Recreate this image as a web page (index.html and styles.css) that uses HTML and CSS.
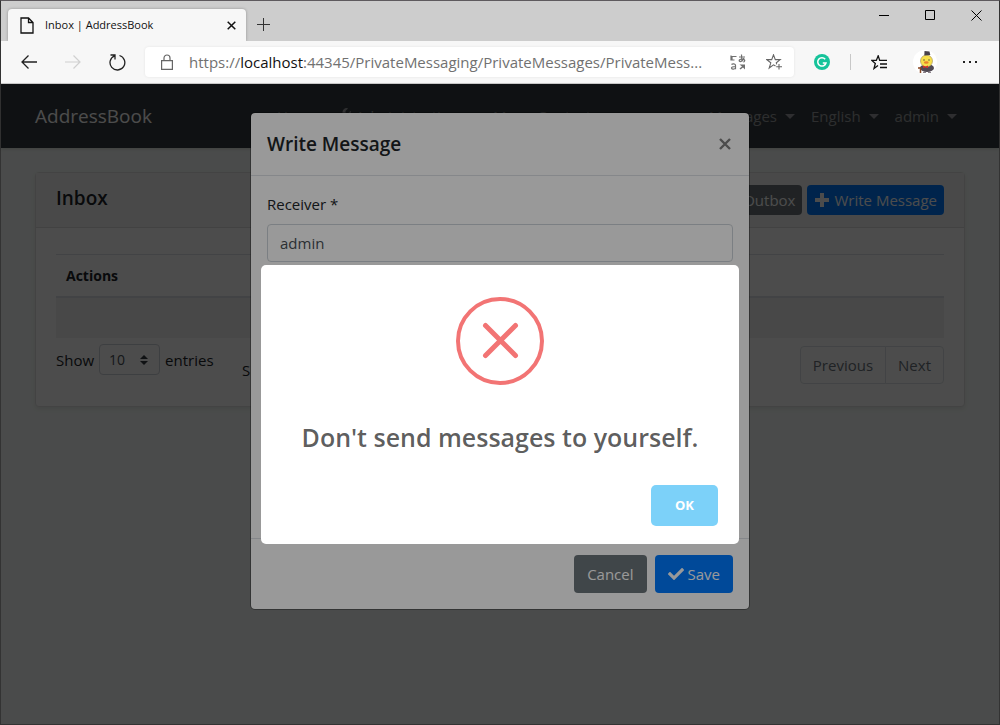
FILE: index.html
```html
<!DOCTYPE html>
<html lang="en">
<head>
<meta charset="utf-8">
<title>Inbox | AddressBook</title>
<link rel="stylesheet" href="styles.css">
</head>
<body>
<div class="window">
  <header class="chrome">
    <div class="tab-strip">
      <div class="tab">
        <svg class="tab-page" width="14" height="17" viewBox="0 0 14 17" fill="none" stroke="#111" stroke-width="1.3"><path d="M1 1h7.500l4.500 4.500V16H1z M8.500 1v4.500H13"/></svg>
        <span class="tab-title">Inbox | AddressBook</span>
        <button class="plain" aria-label="Close tab"><svg width="9" height="9" viewBox="0 0 9 9" stroke="#111" stroke-width="1.500"><path d="M.7.7l7.600 7.600M8.300.7L.7 8.300"/></svg></button>
      </div>
      <button class="plain new-tab" aria-label="New tab"><svg width="13" height="13" viewBox="0 0 13 13" stroke="#333"><path d="M6.500 0v13M0 6.500h13"/></svg></button>
      <div class="window-buttons">
        <button class="plain" aria-label="Minimize"><svg width="10" height="10" viewBox="0 0 10 10" stroke="#000"><path d="M0 5.500h10"/></svg></button>
        <button class="plain" aria-label="Maximize"><svg width="10" height="10" viewBox="0 0 10 10" fill="none" stroke="#000"><path d="M.5.5h9v9h-9z"/></svg></button>
        <button class="plain" aria-label="Close"><svg width="11" height="11" viewBox="0 0 11 11" stroke="#000"><path d="M.5.500l10 10M10.500.500l-10 10"/></svg></button>
      </div>
    </div>
    <div class="toolbar">
      <button class="plain tool" aria-label="Back"><svg width="16" height="14" viewBox="0 0 16 14" fill="none" stroke="#222" stroke-width="1.300"><path d="M16 7H1M7.500.500L1 7l6.500 6.500"/></svg></button>
      <button class="plain tool" aria-label="Forward" disabled><svg width="16" height="14" viewBox="0 0 16 14" fill="none" stroke="#d0d0d0" stroke-width="1.200"><path d="M0 7h15M8.500.500L15 7l-6.500 6.500"/></svg></button>
      <button class="plain tool" aria-label="Refresh"><svg width="17" height="17" viewBox="0 0 17 17" fill="none" stroke="#222" stroke-width="1.300"><path d="M10.500 1.500a7.400 7.400 0 1 1-5 .3M1.500 1h4.500v4.500"/></svg></button>
      <div class="address">
        <svg width="12" height="16" viewBox="0 0 12 16" fill="none" stroke="#666" stroke-width="1.200"><path d="M.6 6.600h10.800v8.800H.6zM3 6.500V4a3 3 0 0 1 6 0v2.500"/></svg>
        <span class="url">https://<b>localhost</b>:44345/PrivateMessaging/PrivateMessages/PrivateMess...</span>
        <button class="plain" aria-label="Translate"><svg width="16" height="16" viewBox="0 0 16 16" fill="none" stroke="#707070" stroke-width="1.200"><path d="M6.500 2.500H2v3.500M1 1.500v4.500h3.500M9 3h6M11.500.500c0 3 0 5 .8 7M14 4c-1 3-3.500 4-4.500 3.300S10 4.800 12.500 5s3 2 1 3.200M1.500 10.500c1-1 4-1 4 .8v4M5.500 12.500c-3 0-4 .5-4 1.500s2.500 2 4 0"/><path d="M9.500 10.500h5.500v5l-2-2-2.500 2-1-1 2.500-2z" fill="#707070" stroke="none"/></svg></button>
        <button class="plain" aria-label="Add to favorites"><svg width="17" height="16" viewBox="0 0 17 16" fill="none" stroke="#666" stroke-width="1.100"><path d="M9.500 12l-2-1.200-4.300 3.200 1.600-5.200L.8 5.600h4.900L7.500.8l1.800 4.800h4.900l-3.900 3.200.4 1.500M13 10v5.500M10.200 12.800h5.800"/></svg></button>
      </div>
      <div class="extensions">
        <button class="plain" aria-label="Grammar check"><svg width="16" height="16" viewBox="0 0 16 16"><circle cx="8" cy="8" r="8" fill="#15c39a"/><path d="M11.200 5.200A4.200 4.200 0 1 0 12 9H8.800" fill="none" stroke="#fff" stroke-width="1.500"/></svg></button>
        <span class="divider"></span>
        <button class="plain" aria-label="Favorites"><svg width="16" height="15" viewBox="0 0 16 15" fill="none" stroke="#111" stroke-width="1.300"><path d="M7 10.500l-4 3 1.300-5L.8 5.400h4.500L7.200.8l1.500 4.600H16M9 9h7M9 12.500h7"/></svg></button>
        <button class="plain profile" aria-label="Profile"><svg width="24" height="24" viewBox="0 0 24 24"><circle cx="12" cy="12" r="12" fill="#fff"/><ellipse cx="14" cy="18" rx="7" ry="4" fill="#514a54"/><path d="M10 22.500h3M15 22.500h3" stroke="#8a8088"/><ellipse cx="13.500" cy="11" rx="6" ry="6" fill="#f7df4b" stroke="#a08a50" stroke-width=".6"/><path d="M11.500 1l5 .5.8 3.500-6 .4z" fill="#47414b"/><circle cx="11" cy="10" r=".7" fill="#443"/><circle cx="16" cy="10" r=".7" fill="#443"/><ellipse cx="13.300" cy="12.500" rx="2.400" ry="1.300" fill="#e9822b"/><path d="M10 15.500l2.500 1 2.500-1V18l-2.500-.8-2.500.8z" fill="#d92b2b"/><path d="M5 18h3M7.500 17v6" stroke="#8b4a25" stroke-width="1.500"/></svg></button>
        <button class="plain" aria-label="Settings and more"><svg width="14" height="2" viewBox="0 0 14 2" fill="#222"><path d="M0 0h2v2H0zM6 0h2v2H6zM12 0h2v2h-2z"/></svg></button>
      </div>
    </div>
  </header>

  <div class="viewport">
    <nav class="navbar">
      <a class="brand" href="#">AddressBook</a>
      <div class="nav-main">
        <a class="nav-link" href="#">Home</a>
        <a class="nav-link caret" href="#"><svg width="16" height="16" viewBox="0 0 512 512" fill="currentColor"><path d="M508 109c-2-9-14-12-20-5l-75 74-68-11-11-68 75-74c6-7 3-18-6-21C320-17 244 49 240 128c-1 17 2 33 7 49L20 404a64 64 0 0 0 90 90l227-227c94 30 193-54 171-158z"/></svg> Administration</a>
        <a class="nav-link" href="#">Menu Contact</a>
      </div>
      <div class="nav-user">
        <a class="nav-link caret" href="#">Messages</a>
        <a class="nav-link caret" href="#">English</a>
        <a class="nav-link caret" href="#">admin</a>
      </div>
    </nav>

    <main class="content">
      <section class="card">
        <div class="card-header">
          <h1 class="card-title">Inbox</h1>
          <div class="card-actions">
            <button class="btn btn-sm secondary">Outbox</button>
            <button class="btn btn-sm primary"><svg width="16" height="16" viewBox="0 0 16 16" fill="currentColor"><path d="M6 1h4v5h5v4h-5v5H6v-5H1V6h5z"/></svg>Write Message</button>
          </div>
        </div>
        <div class="card-body">
          <table class="table">
            <thead><tr><th>Actions</th></tr></thead>
            <tbody><tr><td></td></tr></tbody>
          </table>
          <div class="table-footer">
            <label class="length" for="rows">Show
              <span class="select-wrap"><select id="rows"><option>10</option></select><svg width="8" height="10" viewBox="0 0 8 10" fill="#343a40"><path d="M4 0l4 4H0zM4 10L0 6h8z"/></svg></span>
              entries</label>
            <span class="info">Showing</span>
            <div class="pager"><button disabled>Previous</button><button disabled>Next</button></div>
          </div>
        </div>
      </section>
    </main>

    <div class="backdrop">
      <form class="modal" role="dialog" aria-labelledby="modal-title">
        <div class="modal-header">
          <h2 class="modal-title" id="modal-title">Write Message</h2>
          <button type="button" class="plain modal-close" aria-label="Close"><svg width="12" height="12" viewBox="0 0 12 12" stroke="#808080" stroke-width="2.400"><path d="M1 1l10 10M11 1L1 11"/></svg></button>
        </div>
        <div class="modal-body">
          <label for="receiver">Receiver *</label>
          <input id="receiver" class="field" type="text" value="admin">
        </div>
        <div class="modal-footer">
          <button type="button" class="btn secondary">Cancel</button>
          <button type="button" class="btn primary"><svg width="16" height="16" viewBox="0 0 512 512" fill="currentColor"><path d="M174 439L7 273c-10-10-10-26 0-36l37-37c10-10 26-10 36 0l112 113L432 72c10-10 26-10 36 0l37 37c10 10 10 26 0 36L210 439c-10 10-26 10-36 0z"/></svg>Save</button>
        </div>
      </form>
    </div>

    <div class="alert-overlay">
      <div class="alert" role="alertdialog" aria-labelledby="alert-title">
        <svg class="alert-icon" width="88" height="88" viewBox="0 0 88 88" fill="none" stroke="#f27474"><circle cx="44" cy="44" r="42" stroke-width="4"/><path d="M29.500 28.500l30 30M59.500 28.500l-30 30" stroke-width="5" stroke-linecap="round"/></svg>
        <div class="alert-title" id="alert-title">Don't send messages to yourself.</div>
        <div class="alert-footer"><button class="alert-ok">OK</button></div>
      </div>
    </div>
  </div>
</div>
</body>
</html>
```

FILE: styles.css
```css
* { box-sizing: border-box; }

body {
  margin: 0;
  font-family: "Open Sans", "Noto Sans", sans-serif;
  font-size: 15px;
  line-height: 24px;
  color: #212529;
}

button, input, select { font: inherit; }

svg { display: block; flex: none; }

.plain {
  display: flex;
  align-items: center;
  justify-content: center;
  padding: 0;
  border: 0;
  background: none;
}

.window {
  display: flex;
  flex-direction: column;
  min-height: 100vh;
  border: 1px solid #333;
  border-top-color: #5e5a5e;
}

/* Browser chrome */
.tab-strip {
  display: flex;
  height: 40px;
  padding-left: 7px;
  background: #cdcdcd;
}

.tab {
  display: flex;
  align-items: center;
  width: 238px;
  margin-top: 8px;
  padding: 0 10px 0 12px;
  border-radius: 4px 4px 0 0;
  background: #f7f7f7;
  box-shadow: 0 0 3px rgba(0, 0, 0, .3);
  clip-path: inset(-4px -4px 0 -4px);
}

.tab-title {
  flex: 1;
  margin-left: 11px;
  font-size: 11px;
  color: #111;
}

.new-tab { width: 34px; margin-top: 7px; }

.window-buttons {
  display: flex;
  height: 28px;
  margin-left: auto;
}

.window-buttons .plain { width: 46px; }

.toolbar {
  display: flex;
  align-items: center;
  height: 43px;
  padding-left: 6px;
  border-bottom: 1px solid #ccc;
  background: #f7f7f7;
}

.tool { width: 44px; height: 32px; }

.address {
  display: flex;
  flex: 1;
  align-items: center;
  gap: 20px;
  min-width: 0;
  height: 30px;
  margin-left: 6px;
  padding: 0 11px 0 16px;
  border-radius: 4px;
  background: #fff;
  box-shadow: 0 0 3px rgba(0, 0, 0, .08);
}

.url {
  flex: 1;
  margin: 0 -4px;
  overflow: hidden;
  font-size: 15px;
  white-space: nowrap;
  color: #717171;
}

.url b { font-weight: 400; color: #111; }

.extensions {
  display: flex;
  align-items: center;
  gap: 20px;
  padding: 0 22px 0 20px;
}

.profile { margin: 0 6px; }

.divider { width: 1px; height: 16px; background: #c8c8c8; }

/* Application */
.viewport {
  position: relative;
  flex: 1;
  background: #f8fdfa;
}

.navbar {
  display: flex;
  align-items: center;
  height: 64px;
  padding: 0 34px;
  background: #343a40;
  box-shadow: 0 1px 3px rgba(0, 0, 0, .15);
}

.brand {
  width: 234px;
  font-size: 19px;
  color: #fff;
  text-decoration: none;
}

.nav-main, .nav-user { display: flex; }
.nav-user { margin-left: auto; }

.nav-link {
  display: flex;
  align-items: center;
  gap: 4px;
  padding: 8px;
  color: rgba(255, 255, 255, .5);
  text-decoration: none;
  white-space: nowrap;
}

.caret::after {
  content: "";
  margin-left: 4px;
  border: 5px solid transparent;
  border-top-color: currentColor;
  border-bottom: 0;
}

.content { padding: 24px 34px; }

.card {
  border: 1px solid #e2e2e2;
  border-radius: 4px;
  background: #fff;
  box-shadow: 0 2px 4px rgba(0, 0, 0, .08);
}

.card-header {
  display: flex;
  align-items: center;
  justify-content: space-between;
  padding: 12px 20px;
  border-bottom: 1px solid #dfdfdf;
  background: #f7f7f7;
}

.card-title {
  margin: 0 0 4px;
  font-size: 19px;
  font-weight: 600;
  line-height: 24px;
}

.card-actions { display: flex; gap: 5px; }

.btn {
  display: flex;
  align-items: center;
  gap: 4px;
  padding: 7px 13px;
  border: 0;
  border-radius: 4px;
  color: #fff;
  white-space: nowrap;
}

.btn-sm { padding: 3px 7px; }
.secondary { background: #6c757a; }
.primary { background: #007bff; }

.card-body { padding: 26px 20px 22px; }

.table {
  width: 100%;
  border-collapse: collapse;
}

.table th {
  padding: 9px 10px 8px;
  border-top: 1px solid #dee2e6;
  border-bottom: 2px solid #dee2e6;
  font-size: 14px;
  font-weight: 700;
  text-align: left;
}

.table td { height: 41px; background: #f2f2f2; }

.table-footer {
  display: flex;
  align-items: flex-start;
  padding-top: 6px;
}

.length {
  display: flex;
  align-items: center;
  gap: 5px;
  width: 186px;
}

.select-wrap { position: relative; }

.select-wrap select {
  display: block;
  width: 61px;
  height: 31px;
  padding: 0 9px;
  border: 1px solid #ced4da;
  border-radius: 4px;
  background: #fff;
  color: #495057;
  font-size: 14px;
  appearance: none;
}

.select-wrap svg {
  position: absolute;
  top: 11px;
  right: 12px;
  pointer-events: none;
}

.info { padding-top: 14px; }

.pager { display: flex; margin: 2px 0 0 auto; }

.pager button {
  height: 38px;
  padding: 0 12px;
  border: 1px solid #dee2e6;
  background: #fff;
  color: #6c757d;
}

.pager button:first-child { border-radius: 4px 0 0 4px; }
.pager button:last-child { margin-left: -1px; border-radius: 0 4px 4px 0; }

/* Modal form */
.backdrop {
  position: absolute;
  inset: 0;
  padding: 28px 16px;
  background: rgba(0, 0, 0, .5);
}

.modal {
  display: flex;
  flex-direction: column;
  max-width: 500px;
  min-height: 498px;
  margin: 0 auto;
  border: 1px solid rgba(0, 0, 0, .3);
  border-radius: 5px;
  background: #fff;
  background-clip: padding-box;
}

.modal-header {
  display: flex;
  align-items: center;
  justify-content: space-between;
  padding: 16px 18px 16px 16px;
  border-bottom: 1px solid #dee2e6;
}

.modal-title {
  margin: 0;
  font-size: 19px;
  font-weight: 600;
  line-height: 30px;
}

.modal-body { flex: 1; padding: 16px; }

.modal-body label { display: block; margin-bottom: 8px; }

.field {
  width: 100%;
  height: 38px;
  padding: 0 12px;
  border: 1px solid #ced4da;
  border-radius: 4px;
  background: #fff;
  color: #495057;
}

.modal-footer {
  display: flex;
  justify-content: flex-end;
  gap: 8px;
  padding: 16px;
  border-top: 1px solid #dee2e6;
}

/* Alert */
.alert-overlay {
  position: absolute;
  inset: 0;
  display: flex;
  align-items: center;
  justify-content: center;
  background: rgba(0, 0, 0, .4);
}

.alert {
  width: 478px;
  border-radius: 5px;
  background: #fff;
}

.alert-icon { margin: 32px auto; }

.alert-title {
  padding: 0 16px;
  font-size: 25px;
  font-weight: 600;
  line-height: 40px;
  text-align: center;
  color: rgba(0, 0, 0, .65);
}

.alert-footer {
  display: flex;
  justify-content: flex-end;
  padding: 28px 21px 18px;
}

.alert-ok {
  padding: 8px 24px;
  border: 0;
  border-radius: 5px;
  background: #7cd1f9;
  color: #fff;
  font-size: 13px;
  font-weight: 700;
  line-height: 25px;
}
```
